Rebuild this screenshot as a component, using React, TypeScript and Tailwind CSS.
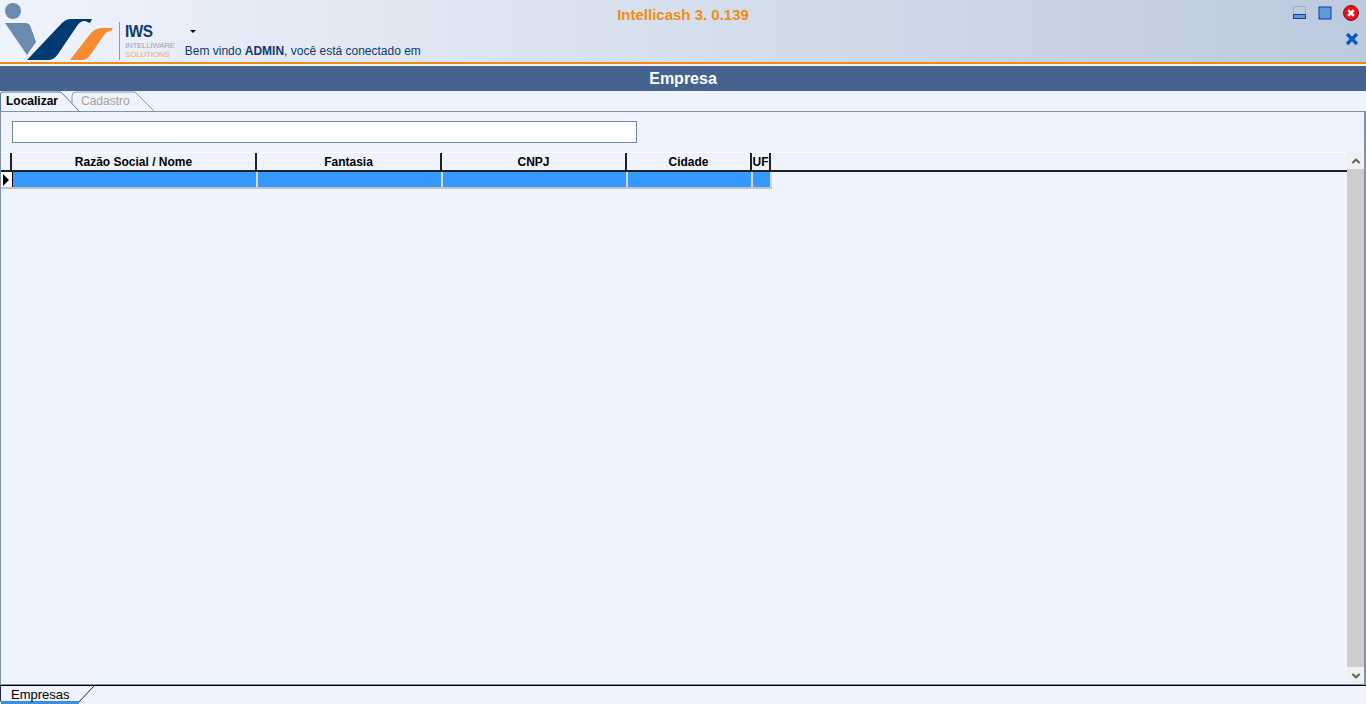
import React from 'react';
import { ChevronUp, ChevronDown } from 'lucide-react';

const columns = [
  { title: 'Razão Social / Nome', width: 'w-[245px]' },
  { title: 'Fantasia', width: 'w-[185px]' },
  { title: 'CNPJ', width: 'w-[185px]' },
  { title: 'Cidade', width: 'w-[125px]' },
  { title: 'UF', width: 'w-[19px]' },
];

function Logo() {
  return (
    <svg width="115" height="62" viewBox="0 0 115 62" className="shrink-0">
      <circle cx="13" cy="11" r="8" fill="#6b8aad" />
      <path d="M5 23 H25 Q30 23 31 28 L36 42 L27 55 Z" fill="#6b8aad" />
      <path d="M27 60 L62 23 Q66 19 71 19 L92 19 L90 23 L85 21 Q80 21 77 26 L58 54 Q54 60 48 60 Z" fill="#003a70" />
      <path d="M70 60 L91 33 Q96 28 102 28 L113 28 L111 31 Q107 31 104 35 L91 54 Q87 60 82 60 Z" fill="#f68b33" />
    </svg>
  );
}

function Brand() {
  return (
    <div className="flex h-[38px] shrink-0 self-end mb-[2px] ml-[4px] border-l border-[#8d9aae] pl-[5px] flex-col">
      <span className="text-[17px] leading-[20px] font-bold text-[#0f3a6b] tracking-[-0.5px] scale-x-90 origin-left">IWS</span>
      <span className="text-[8px] leading-[8px] text-[#9aa3b0] tracking-[-0.3px]">INTELLIWARE</span>
      <span className="text-[8px] leading-[9px] text-[#f2a865] tracking-[-0.2px]">SOLUTIONS</span>
    </div>
  );
}

function WindowButtons() {
  return (
    <div className="flex flex-col items-end pr-[7px] pt-[5px]">
      <div className="flex items-center gap-[11px]">
        <svg width="14" height="14" viewBox="0 0 14 14">
          <rect x="0.5" y="0.5" width="12" height="12" fill="none" stroke="#6c9bd4" strokeDasharray="1 1" />
          <rect x="0.5" y="8.5" width="12" height="4" fill="#5f9bd6" stroke="#0a3fa8" />
        </svg>
        <svg width="14" height="14" viewBox="0 0 14 14">
          <rect x="1" y="1" width="12" height="12" fill="#5f9bd6" stroke="#0a3fa8" />
        </svg>
        <svg width="16" height="16" viewBox="0 0 16 16">
          <circle cx="8" cy="8" r="7.5" fill="#e8101c" stroke="#8a1018" />
          <path d="M5.2 5.2 L10.8 10.8 M10.8 5.2 L5.2 10.8" stroke="#fff" strokeWidth="2.6" />
        </svg>
      </div>
      <svg width="14" height="14" viewBox="0 0 14 14" className="mt-[11px]">
        <path d="M2 2 L12 12 M12 2 L2 12" stroke="#0b5cc0" strokeWidth="3.4" />
      </svg>
    </div>
  );
}

function FolderTab({ label, active, width }: { label: string; active?: boolean; width: string }) {
  return (
    <div className={`relative h-[20px] flex items-center ${width} ${active ? 'font-bold text-black' : 'text-[#a3a3a3]'}`}>
      <span className={`text-[12px] ${active ? 'pl-[6px]' : 'pl-[10px]'}`}>{label}</span>
    </div>
  );
}

export default function App() {
  return (
    <div className="h-[704px] w-[1366px] overflow-hidden flex flex-col bg-[#eef3fe] font-['Liberation_Sans',sans-serif]">
      {/* barra do topo */}
      <header className="h-[62px] shrink-0 grid grid-cols-[1fr_auto_1fr] bg-gradient-to-r from-[#eff3fc] to-[#bccadd]">
        <div className="flex items-start min-w-0">
          <Logo />
          <Brand />
          <div className="relative flex-1 min-w-0 self-stretch">
            <span className="absolute left-[15px] top-[30px] border-x-[3px] border-t-[3px] border-x-transparent border-t-black" />
            <div className="absolute left-[10px] top-[44px] whitespace-nowrap text-[12px] leading-[15px] text-[#0f3a6b]">
              Bem vindo <b>ADMIN</b>, você está conectado em
            </div>
          </div>
        </div>
        <div className="pt-[6px] text-[15px] leading-[17px] font-bold text-[#f28c13]">Intellicash 3. 0.139</div>
        <div className="flex justify-end">
          <WindowButtons />
        </div>
      </header>
      <div className="h-[2px] shrink-0 bg-[#ed8b16]" />
      <div className="h-[2px] shrink-0 bg-[#eef3fe]" />
      <div className="h-[25px] shrink-0 bg-[#46628f] flex items-center justify-center text-[16px] font-bold text-white">
        Empresa
      </div>

      {/* abas */}
      <div className="h-[20px] shrink-0 flex items-center relative">
        <svg width="160" height="20" viewBox="0 0 160 20" className="absolute left-0 top-0">
          <path d="M72 20 L72 5 Q72 1 76 1 L135 1 L154 20" fill="#f0f3fb" stroke="#8b9bb5" />
          <path d="M0 20 L0 3 Q0 1 3 1 L61 1 L79 20" fill="#eef3fe" />
          <path d="M0.5 20 L0.5 3 Q0.5 1 3 1 L61 1" fill="none" stroke="#5f7596" />
          <path d="M61 1 L79 20" fill="none" stroke="#5f7596" />
        </svg>
        <div className="relative flex">
          <FolderTab label="Localizar" active width="w-[71px]" />
          <FolderTab label="Cadastro" width="w-[80px]" />
        </div>
      </div>

      {/* painel */}
      <main className="flex-1 min-h-0 border border-[#7f90ad] border-b-[#7f90ad] flex flex-col border-r-2">
        <div className="pl-[11px] pt-[9px]">
          <input type="text" className="block h-[22px] w-[625px] bg-white border border-[#7288a8]" />
        </div>
        <div className="flex-1 min-h-0 mt-[9px] flex">
          <div className="flex-1 min-w-0 border-t border-white">
            <div className="flex h-[19px] border-b-2 border-[#222]">
              <div className="w-[11px] shrink-0 border-r-2 border-[#222]" />
              {columns.map((col) => (
                <div
                  key={col.title}
                  className={`${col.width} shrink-0 border-r-2 border-[#222] flex items-center justify-center text-[12px] font-bold text-black`}
                >
                  {col.title}
                </div>
              ))}
            </div>
            <div className="flex h-[17px] w-[771px] border-b-2 border-[#c3c3c3]">
              <div className="w-[12px] shrink-0 bg-white border-r border-black flex items-center">
                <span className="ml-[2px] border-y-[6px] border-l-[6px] border-y-transparent border-l-black" />
              </div>
              {columns.map((col) => (
                <div key={col.title} className={`${col.width} shrink-0 bg-[#3399ff] border-r-2 border-[#d8d8d8]`} />
              ))}
            </div>
          </div>
          <div className="w-[17px] shrink-0 flex flex-col bg-[#f0f0f0]">
            <div className="h-[17px] flex items-center justify-center text-[#606060]">
              <ChevronUp size={12} strokeWidth={4} />
            </div>
            <div className="flex-1 bg-[#cdcdcd]" />
            <div className="h-[17px] flex items-center justify-center text-[#606060]">
              <ChevronDown size={12} strokeWidth={4} />
            </div>
          </div>
        </div>
      </main>

      {/* aba de baixo */}
      <footer className="h-[19px] shrink-0 border-t border-black relative">
        <svg width="96" height="18" viewBox="0 0 96 18" className="absolute left-0 top-0">
          <path d="M0.5 0 L0.5 14 Q0.5 17 4 17 L78 17 L94 0" fill="#f0f3fb" stroke="#1c2a44" />
          <path d="M1 16.5 H79" stroke="#3a8fe0" strokeWidth="3" />
        </svg>
        <span className="relative block pl-[11px] text-[13px] leading-[17px] text-black">Empresas</span>
      </footer>
    </div>
  );
}
